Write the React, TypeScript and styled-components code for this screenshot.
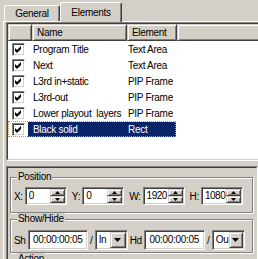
import React from 'react';
import styled, { createGlobalStyle, css } from 'styled-components';

const GlobalStyle = createGlobalStyle`
  html, body {
    margin: 0;
    padding: 0;
    background: #d4d0c8;
  }
  body {
    font-family: "Liberation Sans", Arial, sans-serif;
    font-size: 10px;
    letter-spacing: -0.3px;
    color: #000;
  }
`;

const raised = css`
  box-sizing: border-box;
  background: #d4d0c8;
  border: 1px solid;
  border-color: #d4d0c8 #404040 #404040 #d4d0c8;
  box-shadow: inset 1px 1px #fff, inset -1px -1px #808080;
`;

const sunkenOuter = css`
  box-sizing: border-box;
  border: 1px solid;
  border-color: #808080 #fff #fff #808080;
`;

const sunkenInner = css`
  box-sizing: border-box;
  border: 1px solid;
  border-color: #404040 #d4d0c8 #d4d0c8 #404040;
`;

const Window = styled.div`
  width: 258px;
  height: 259px;
  overflow: hidden;
  background: #d4d0c8;
`;

const TabStrip = styled.div`
  display: flex;
  align-items: flex-end;
  height: 21px;
  padding-left: 4px;
  position: relative;
  z-index: 1;
`;

const Tab = styled.div<{ $active?: boolean }>`
  box-sizing: border-box;
  display: flex;
  align-items: center;
  justify-content: center;
  width: ${p => (p.$active ? 62 : 56)}px;
  height: ${p => (p.$active ? 20 : 16)}px;
  margin-bottom: ${p => (p.$active ? -1 : 0)}px;
  background: #d4d0c8;
  border-left: 1px solid #fff;
  border-top: 1px solid #fff;
  border-right: 1px solid #404040;
  box-shadow: inset -1px 0 #808080;
  border-radius: 2px 2px 0 0;
  padding-bottom: 1px;
`;

const TabPanel = styled.div`
  width: 300px;
  margin-left: 3px;
  padding-left: 2px;
  border-left: 1px solid #fff;
  border-top: 1px solid #fff;
`;

const ListFrame = styled.div`
  ${sunkenOuter};
  width: 280px;
  height: 139px;
`;

const ListBody = styled.div`
  ${sunkenInner};
  height: 100%;
  background: #fff;
`;

const Header = styled.div`
  display: flex;
  height: 17px;
`;

const HeaderCell = styled.div<{ $w?: number }>`
  ${raised};
  flex: ${p => (p.$w ? `0 0 ${p.$w}px` : '1')};
  height: 17px;
  display: flex;
  align-items: center;
  padding-left: 4px;
`;

const Row = styled.div<{ $focused?: boolean }>`
  display: flex;
  align-items: center;
  width: 168px;
  height: 16px;
  outline: ${p => (p.$focused ? '1px dotted #b89c58' : 'none')};
  outline-offset: -1px;
`;

const CheckCell = styled.div`
  flex: 0 0 20px;
  height: 100%;
  display: flex;
  align-items: center;
  justify-content: center;
`;

const CheckBox = styled.div`
  box-sizing: border-box;
  width: 13px;
  height: 13px;
  background: #fff;
  border: 1px solid;
  border-color: #808080 #fff #fff #808080;
  box-shadow: inset 1px 1px #404040, inset -1px -1px #d4d0c8;
  display: flex;
`;

const Cell = styled.div<{ $w: number; $pad: number; $selected?: boolean }>`
  box-sizing: border-box;
  flex: 0 0 ${p => p.$w}px;
  height: 15px;
  line-height: 15px;
  padding-left: ${p => p.$pad}px;
  white-space: pre;
  overflow: hidden;
  background: ${p => (p.$selected ? '#0a246a' : 'transparent')};
  color: ${p => (p.$selected ? '#fff' : '#000')};
`;

const LowerPanel = styled.div`
  ${sunkenOuter};
  width: 252px;
  height: 120px;
  margin-top: 5px;
`;

const LowerBody = styled.div`
  ${sunkenInner};
  height: 100%;
  padding: 9px 0 0 2px;
`;

const GroupBox = styled.div<{ $pt: number; $pb: number }>`
  box-sizing: border-box;
  position: relative;
  width: 243px;
  border: 1px solid #808080;
  box-shadow: inset 1px 1px #fff, 1px 1px #fff;
  padding: ${p => p.$pt}px 3px ${p => p.$pb}px 3px;
  & + & {
    margin-top: 6px;
  }
`;

const Legend = styled.span`
  position: absolute;
  top: -7px;
  left: 6px;
  line-height: 12px;
  padding: 0 1px;
  background: #d4d0c8;
`;

const FieldRow = styled.div<{ $gap: number }>`
  display: flex;
  align-items: center;
  gap: ${p => p.$gap}px;
`;

const Field = styled.div`
  display: flex;
  align-items: center;
  gap: 2px;
`;

const SpinBox = styled.div`
  ${sunkenOuter};
  width: 42px;
  height: 18px;
  display: flex;
  background: #fff;
  box-shadow: inset 1px 1px #404040, inset -1px -1px #d4d0c8;
  padding: 1px;
`;

const SpinValue = styled.div`
  flex: 1;
  padding-left: 2px;
  line-height: 14px;
  letter-spacing: -0.5px;
  overflow: hidden;
`;

const SpinButtons = styled.div`
  display: flex;
  flex-direction: column;
  flex: 0 0 15px;
`;

const SpinButton = styled.div`
  ${raised};
  flex: 1;
  display: flex;
  align-items: center;
  justify-content: center;
`;

const TimeBox = styled.div<{ $w: number }>`
  ${sunkenOuter};
  width: ${p => p.$w}px;
  height: 20px;
  background: #fff;
  box-shadow: inset 1px 1px #404040, inset -1px -1px #d4d0c8;
  text-align: center;
  line-height: 18px;
`;

const Slash = styled.span`
  width: 3px;
  text-align: center;
`;

const Combo = styled.div`
  ${sunkenOuter};
  width: 33px;
  height: 20px;
  display: flex;
  padding: 1px;
  background: #fff;
  box-shadow: inset 1px 1px #404040, inset -1px -1px #d4d0c8;
`;

const ComboText = styled.div`
  flex: 1;
  padding-left: 2px;
  line-height: 16px;
`;

const DropButton = styled.div`
  ${raised};
  width: 16px;
  display: flex;
  align-items: center;
  justify-content: center;
`;

const Check = () => (
  <svg width="11" height="11" viewBox="0 0 11 11">
    <path d="M2 4 L4 6 L8 2 L8 5 L4 9 L2 7 Z" fill="#000" />
  </svg>
);

const Arrow = ({ up, w, h }: { up?: boolean; w: number; h: number }) => (
  <svg width={w} height={h} viewBox={`0 0 ${w} ${h}`}>
    <path d={up ? `M0 ${h} L${w / 2} 0 L${w} ${h} Z` : `M0 0 L${w} 0 L${w / 2} ${h} Z`} fill="#000" />
  </svg>
);

const items = [
  { name: 'Program Title', element: 'Text Area' },
  { name: 'Next', element: 'Text Area' },
  { name: 'L3rd in+static', element: 'PIP Frame' },
  { name: 'L3rd-out', element: 'PIP Frame' },
  { name: 'Lower playout  layers', element: 'PIP Frame' },
  { name: 'Black solid', element: 'Rect' },
];

const Spin = ({ value }: { value: string }) => (
  <SpinBox>
    <SpinValue>{value}</SpinValue>
    <SpinButtons>
      <SpinButton>
        <Arrow up w={5} h={3} />
      </SpinButton>
      <SpinButton>
        <Arrow w={5} h={3} />
      </SpinButton>
    </SpinButtons>
  </SpinBox>
);

const Dropdown = ({ value }: { value: string }) => (
  <Combo>
    <ComboText>{value}</ComboText>
    <DropButton>
      <Arrow w={7} h={4} />
    </DropButton>
  </Combo>
);

export default function App() {
  const selected = 5;
  return (
    <Window>
      <GlobalStyle />
      <TabStrip>
        <Tab>General</Tab>
        <Tab $active>Elements</Tab>
      </TabStrip>
      <TabPanel>
        <ListFrame>
          <ListBody>
            <Header>
              <HeaderCell $w={24} />
              <HeaderCell $w={95}>Name</HeaderCell>
              <HeaderCell $w={50}>Element</HeaderCell>
              <HeaderCell />
            </Header>
            {items.map((it, i) => (
              <Row key={it.name} $focused={i === selected}>
                <CheckCell>
                  <CheckBox>
                    <Check />
                  </CheckBox>
                </CheckCell>
                <Cell $w={99} $pad={5} $selected={i === selected}>
                  {it.name}
                </Cell>
                <Cell $w={49} $pad={1} $selected={i === selected}>
                  {it.element}
                </Cell>
              </Row>
            ))}
          </ListBody>
        </ListFrame>
        <LowerPanel>
          <LowerBody>
            <GroupBox $pt={9} $pb={7}>
              <Legend>Position</Legend>
              <FieldRow $gap={5}>
                <Field>
                  X:
                  <Spin value="0" />
                </Field>
                <Field>
                  Y:
                  <Spin value="0" />
                </Field>
                <Field>
                  W:
                  <Spin value="1920" />
                </Field>
                <Field>
                  H:
                  <Spin value="1080" />
                </Field>
              </FieldRow>
            </GroupBox>
            <GroupBox $pt={10} $pb={2}>
              <Legend>Show/Hide</Legend>
              <FieldRow $gap={2}>
                <span>Sh</span>
                <TimeBox $w={60}>00:00:00:05</TimeBox>
                <Slash>/</Slash>
                <Dropdown value="In" />
                <span>Hd</span>
                <TimeBox $w={61}>00:00:00:05</TimeBox>
                <Slash>/</Slash>
                <Dropdown value="Ou" />
              </FieldRow>
            </GroupBox>
            <GroupBox $pt={10} $pb={10}>
              <Legend>Action</Legend>
              <FieldRow $gap={2}>&nbsp;</FieldRow>
            </GroupBox>
          </LowerBody>
        </LowerPanel>
      </TabPanel>
    </Window>
  );
}
